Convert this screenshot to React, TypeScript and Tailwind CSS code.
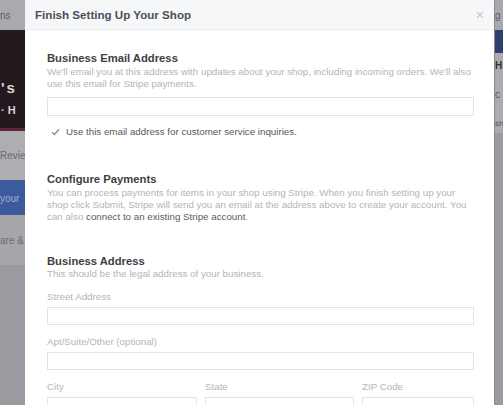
import React from "react";

const font = { fontFamily: '"Liberation Sans", Arial, sans-serif' };

function Field({ label, className = "" }: { label: string; className?: string }) {
  return (
    <div className={className}>
      <div className="h-[13px] text-[9.75px] leading-[13px] text-[#b4b4ba]">{label}</div>
      <div className="mt-[4px] h-[18px] border border-[#e3e3e6] bg-white" />
    </div>
  );
}

export default function App() {
  return (
    <div className="flex h-[405px] w-[503px] overflow-hidden bg-[#9c9aa0]" style={font}>
      {/* page behind the dialog, left edge */}
      <div className="flex w-[25px] shrink-0 flex-col overflow-hidden whitespace-nowrap text-[10px]">
        <div className="flex h-[30px] shrink-0 items-center bg-[#aaa9ad] text-[#5c5c60]">ns</div>
        <div className="flex h-[98px] shrink-0 flex-col bg-[#231a1f] pl-[1px] font-bold text-[#d8d4d8]">
          <div className="mt-[50px] text-[15px] leading-[16px] tracking-[2px]">'s</div>
          <div className="mt-[8px] text-[11px] leading-[12px]">· H</div>
        </div>
        <div className="h-[3px] shrink-0 bg-[#5a2636]" />
        <div className="flex h-[49px] shrink-0 items-start bg-[#aeadb1] pt-[17px] text-[#6a6a70]">Revie</div>
        <div className="flex h-[35px] shrink-0 items-end bg-[#3d5a9c] pb-[9px] text-[#9fb0d6]">your</div>
        <div className="flex h-[50px] shrink-0 items-center bg-[#a6a5aa] text-[#6c6c74]">are &amp;</div>
        <div className="flex-1 bg-[#9c9aa0]" />
      </div>

      {/* dialog */}
      <div className="flex w-[469px] shrink-0 flex-col overflow-hidden bg-white">
        <div className="flex h-[30px] shrink-0 items-center justify-between border-b border-[#e9eaed] bg-[#f6f7f9] pl-[10px] pr-[10px]">
          <span className="text-[11.6px] font-bold text-[#4b4f56]">Finish Setting Up Your Shop</span>
          <span className="text-[14px] leading-none text-[#c4c5c9]">×</span>
        </div>

        <div className="flex shrink-0 flex-col px-[22px] pr-[20px] pt-[21px]">
          <div className="text-[11.25px] font-bold leading-[14px] text-[#3e4045]">Business Email Address</div>
          <p className="mt-[1px] text-[9.75px] leading-[12px] text-[#b4b4ba]">
            We'll email you at this address with updates about your shop, including incoming orders. We'll also use this email for Stripe payments.
          </p>
          <div className="mt-[7px] h-[19px] border border-[#e3e3e6]" />
          <div className="mt-[9px] flex items-center gap-[6px] pl-[4px] text-[9.75px] leading-[14px] text-[#55575c]">
            <svg width="9" height="8" viewBox="0 0 9 8" fill="none">
              <path d="M1 4.2 L3.4 6.5 L8 1.2" stroke="#8d8f94" strokeWidth="1.4" />
            </svg>
            <span>Use this email address for customer service inquiries.</span>
          </div>

          <div className="mt-[33px] text-[11.25px] font-bold leading-[14px] text-[#3e4045]">Configure Payments</div>
          <div className="mt-[1px] text-[9.75px] leading-[12px] text-[#b4b4ba]">
            <p>
              You can process payments for items in your shop using Stripe. When you finish setting up your shop click Submit, Stripe will send you an email at the address above to create your account. You
            </p>
            <div className="flex whitespace-pre">
              <span>can also </span>
              <span className="text-[#5a5c61]">connect to an existing Stripe account</span>
              <span>.</span>
            </div>
          </div>

          <div className="mt-[31px] text-[11.25px] font-bold leading-[14px] text-[#3e4045]">Business Address</div>
          <p className="text-[9.75px] leading-[12px] text-[#b4b4ba]">This should be the legal address of your business.</p>

          <Field label="Street Address" className="mt-[10px]" />
          <Field label="Apt/Suite/Other (optional)" className="mt-[10px]" />
          <div className="mt-[10px] flex gap-[8px]">
            <Field label="City" className="w-[150px]" />
            <Field label="State" className="w-[149px]" />
            <Field label="ZIP Code" className="flex-1" />
          </div>
        </div>
      </div>

      {/* page behind the dialog, right edge */}
      <div className="flex w-[9px] shrink-0 flex-col overflow-hidden whitespace-nowrap border-l border-[#8a898e] text-[10px]">
        <div className="flex h-[30px] shrink-0 items-center bg-[#a9a8ac] text-[#5c5c60]">g</div>
        <div className="h-[23px] shrink-0 bg-[#2c3f6e]" />
        <div className="flex h-[80px] shrink-0 flex-col bg-[#acabaf] text-[#55555a]">
          <div className="mt-[5px] font-bold text-[#333]">H</div>
          <div className="mt-[14px]">c</div>
          <div className="mt-[16px] text-[8px]">sh</div>
        </div>
        <div className="flex-1 bg-[#9c9aa0]" />
      </div>
    </div>
  );
}
